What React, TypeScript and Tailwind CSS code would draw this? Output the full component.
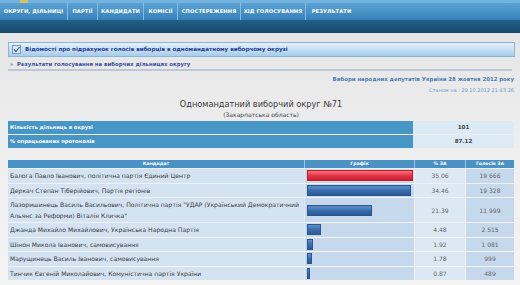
import React from "react";

const navItems: { label: string; w: string }[] = [
  { label: "ОКРУГИ, ДІЛЬНИЦІ", w: "w-[67px]" },
  { label: "ПАРТІЇ", w: "w-[30px]" },
  { label: "КАНДИДАТИ", w: "w-[46px]" },
  { label: "КОМІСІЇ", w: "w-[34px]" },
  { label: "СПОСТЕРЕЖЕННЯ", w: "w-[63px]" },
  { label: "ХІД ГОЛОСУВАННЯ", w: "w-[65px]" },
  { label: "РЕЗУЛЬТАТИ", w: "w-[52px]" },
];

type Row = { name: string; party: string; pct: number; votes: string; two?: boolean; red?: boolean };

const rows: Row[] = [
  { name: "Балога Павло Іванович", party: ", політична партія Єдиний Центр", pct: 35.06, votes: "19 666", red: true },
  { name: "Деркач Степан Тіберійович", party: ", Партія регіонів", pct: 34.46, votes: "19 328" },
  {
    name: "Лазоришинець Василь Васильович",
    party: ", Політична партія \"УДАР (Український Демократичний Альянс за Реформи) Віталія Кличка\"",
    pct: 21.39,
    votes: "11 999",
    two: true,
  },
  { name: "Джанда Михайло Михайлович", party: ", Українська Народна Партія", pct: 4.48, votes: "2 515" },
  { name: "Шінон Микола Іванович", party: ", самовисування", pct: 1.92, votes: "1 081" },
  { name: "Марущинець Василь Іванович", party: ", самовисування", pct: 1.78, votes: "999" },
  { name: "Тинчик Євгеній Миколайович", party: ", Комуністична партія України", pct: 0.87, votes: "489" },
];

export default function App() {
  return (
    <div className="w-[520px] h-[285px] overflow-hidden bg-gradient-to-b from-[#e3e3e3] via-[#eeeeee] to-[#f4f4f4] font-['DejaVu_Sans',sans-serif] text-[#333]">
      {/* top band */}
      <div className="h-[3px] bg-[#72b4df] pl-[20px]">
        <div className="w-[8px] h-[3px] bg-[#d9c063]" />
      </div>
      {/* nav */}
      <div className="h-[17px] flex items-stretch bg-gradient-to-b from-[#5ba3d4] to-[#3480b8]">
        {navItems.map((n, i) => (
          <div
            key={n.label}
            className={`${n.w} flex items-center justify-center text-white font-bold text-[5.2px] tracking-[0.1px] whitespace-nowrap ${
              i > 0 ? "border-l border-[#86bde3]" : ""
            }`}
          >
            {n.label}
          </div>
        ))}
      </div>
      <div className="h-[13px] bg-gradient-to-b from-[#215f87] to-[#174a6c]" />

      <div className="pl-[8px] pr-[6px]">
        {/* section header */}
        <div className="mt-[9px] h-[15px] w-[507px] flex items-center border border-[#86b6dc] bg-gradient-to-b from-[#e6f2fb] to-[#a6cdec]">
          <div className="ml-[3px] w-[9px] h-[9px] border border-[#6d9cc6] bg-[#dcecf9] flex items-center justify-center">
            <svg width="7" height="7" viewBox="0 0 7 7">
              <path d="M1 3.5 L3 5.5 L6.5 1" stroke="#2f5fa3" strokeWidth="1.2" fill="none" />
            </svg>
          </div>
          <span className="ml-[4px] text-[5.6px] font-bold text-[#24408f] whitespace-nowrap">
            Відомості про підрахунок голосів виборців в одномандатному виборчому окрузі
          </span>
        </div>
        {/* subheader */}
        <div className="mt-[2px] h-[10px] flex items-center text-[5.4px] font-bold text-[#3b50a0] whitespace-nowrap">
          <span className="ml-[2px] w-[7px] text-[#6b78b0]">»</span>
          <span>Результати голосування на виборчих дільницях округу</span>
        </div>
        <div className="h-[2px] w-[504px] bg-[#b9c9d9]" />

        <div className="mt-[4px] text-right text-[5.4px] font-bold text-[#4b7cb3] whitespace-nowrap leading-[8px]">
          Вибори народних депутатів України 28 жовтня 2012 року
        </div>
        <div className="mt-[3px] text-right text-[5px] text-[#6d9ccb] whitespace-nowrap leading-[8px]">
          Станом на : 29.10.2012 21:43:26
        </div>

        <div className="mt-[5px] text-center text-[8.2px] text-[#3d3d3d] leading-[11px] whitespace-nowrap">
          Одномандатний виборчий округ №71
        </div>
        <div className="text-center text-[6px] text-[#444] leading-[10px] whitespace-nowrap">
          (Закарпатська область)
        </div>

        {/* summary table */}
        <div className="mt-[1px] w-[506px] flex flex-col gap-[1px]">
          {[
            ["Кількість дільниць в окрузі", "101"],
            ["% опрацьованих протоколів", "87.12"],
          ].map(([l, v]) => (
            <div key={l} className="flex h-[13px]">
              <div className="w-[405px] bg-[#4896c6] text-white font-bold text-[5.2px] flex items-center pl-[2px] whitespace-nowrap">
                {l}
              </div>
              <div className="w-[101px] bg-[#dceaf6] text-[#444] font-bold text-[5.6px] flex items-center justify-center">
                {v}
              </div>
            </div>
          ))}
        </div>

        {/* results table */}
        <div className="mt-[12px] w-[506px] flex flex-col gap-[1px]">
          <div className="flex h-[8px] bg-[#4a91c4] text-white font-bold text-[4.6px]">
            <div className="w-[296px] flex items-center justify-center">Кандидат</div>
            <div className="w-[110px] flex items-center justify-center border-l border-[#9cc6e6]">Графік</div>
            <div className="w-[51px] flex items-center justify-center border-l border-[#9cc6e6]">% ЗА</div>
            <div className="w-[49px] flex items-center justify-center border-l border-[#9cc6e6]">Голосів ЗА</div>
          </div>
          {rows.map((r) => (
            <div key={r.name} className={`flex ${r.two ? "h-[24px]" : "h-[13.5px]"}`}>
              <div className="w-[296px] bg-[#d4e3f2] flex items-center pl-[2px] pr-[4px] text-[6.1px] leading-[11px] text-[#3a3a3a]">
                <span>
                  {r.name}
                  {r.party}
                </span>
              </div>
              <div className="w-[110px] bg-[#c5d8ec] flex items-center pl-[2px] border-l border-[#dfeaf5]">
                <div
                  className={`h-[11px] border ${
                    r.red
                      ? "bg-gradient-to-b from-[#f2727e] via-[#e73346] to-[#c71f32] border-[#c21c30]"
                      : "bg-gradient-to-b from-[#5e8fc9] via-[#3b6eae] to-[#2b5a96] border-[#2a5690]"
                  }`}
                  style={{ width: `${Math.max(3, (r.pct / 35.06) * 106)}px` }}
                />
              </div>
              <div className="w-[51px] bg-[#dce8f4] flex items-center justify-center text-[6px] text-[#666] border-l border-[#e8f0f8]">
                {r.pct.toFixed(2)}
              </div>
              <div className="w-[49px] bg-[#c6d8eb] flex items-center justify-center text-[6px] text-[#666] border-l border-[#e8f0f8]">
                {r.votes}
              </div>
            </div>
          ))}
        </div>
      </div>
    </div>
  );
}
